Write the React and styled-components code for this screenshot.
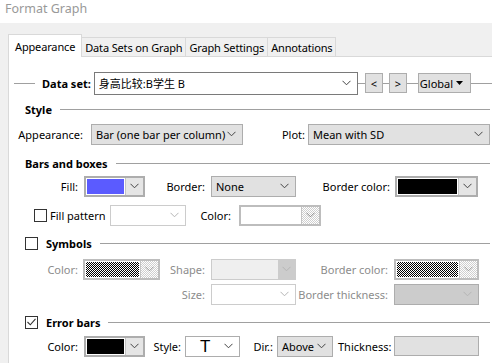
import styled, { createGlobalStyle } from "styled-components";

const GlobalStyle = createGlobalStyle`
  body {
    margin: 0;
    background: #f0f0f0;
    font-family: "Segoe UI", "Noto Sans", "Noto Sans CJK SC", sans-serif;
    font-size: 11px;
    color: #000;
    overflow: hidden;
  }
`;

const CHECKER =
  "repeating-conic-gradient(#000 0% 25%, #fff 0% 50%) 0 0 / 2px 2px";
const LIGHT_CHECKER =
  "repeating-conic-gradient(#cfcfcf 0% 25%, #fff 0% 50%) 0 0 / 2px 2px";

// Small chevron used on every dropdown
const Chevron = ({ color = "#444" }) => (
  <svg width="9" height="6" viewBox="0 0 9 6">
    <path d="M0.5 0.8 L4.5 4.8 L8.5 0.8" fill="none" stroke={color} strokeWidth="1" />
  </svg>
);

const Window = styled.div`
  width: 492px;
  height: 363px;
  display: flex;
  flex-direction: column;
`;

const TitleBar = styled.div`
  height: 23px;
  background: #fff;
  color: #999;
  font-size: 12.5px;
  padding-left: 5px;
  line-height: 17px;
`;

const Body = styled.div`
  flex: 1;
  padding: 11px 0 0 8px;
  display: flex;
  flex-direction: column;
`;

const TabStrip = styled.div`
  display: flex;
  align-items: flex-end;
  height: 22px;
`;

const Tab = styled.div`
  height: ${({ $active }) => ($active ? 22 : 18)}px;
  padding: 0 ${({ $active }) => ($active ? 6 : 3)}px;
  display: flex;
  align-items: center;
  letter-spacing: -0.15px;
  background: ${({ $active }) => ($active ? "#fff" : "#f0f0f0")};
  border: 1px solid #d9d9d9;
  border-bottom: none;
  margin-left: ${({ $active }) => ($active ? 0 : -1)}px;
  position: relative;
  z-index: ${({ $active }) => ($active ? 1 : 0)};
  margin-bottom: ${({ $active }) => ($active ? -1 : 0)}px;
`;

const Panel = styled.div`
  flex: 1;
  background: #fff;
  border-top: 1px solid #d9d9d9;
  border-left: 1px solid #d9d9d9;
  display: flex;
  flex-direction: column;
  padding-top: 15px;
`;

const Row = styled.div`
  display: flex;
  align-items: center;
  height: 22px;
  flex: none;
  margin-top: ${({ $mt }) => $mt || 0}px;
  padding-left: ${({ $pl }) => $pl || 0}px;
  color: ${({ $dim }) => ($dim ? "#8c8c8c" : "#000")};
`;

const Line = styled.div`
  height: 1px;
  background: #a0a0a0;
  width: ${({ $w }) => ($w ? `${$w}px` : "auto")};
  flex: ${({ $w }) => ($w ? "none" : 1)};
  margin-left: ${({ $ml }) => $ml || 0}px;
  margin-right: ${({ $mr }) => $mr || 0}px;
`;

const Heading = styled.span`
  font-weight: bold;
  margin-left: ${({ $ml }) => $ml || 0}px;
`;

const Label = styled.span`
  width: ${({ $w }) => $w}px;
  flex: none;
  text-align: ${({ $left }) => ($left ? "left" : "right")};
  margin-left: ${({ $ml }) => $ml || 0}px;
  margin-right: ${({ $gap }) => ($gap === undefined ? 6 : $gap)}px;
  white-space: nowrap;
  color: ${({ $dim }) => ($dim ? "#8c8c8c" : "inherit")};
`;

const Select = styled.div`
  width: ${({ $w }) => $w}px;
  height: ${({ $h }) => $h || 21}px;
  box-sizing: border-box;
  flex: none;
  display: flex;
  align-items: center;
  justify-content: space-between;
  padding: 0 6px 0 4px;
  margin-left: ${({ $ml }) => $ml || 0}px;
  border: 1px solid ${({ $variant }) =>
    $variant === "edit" ? "#7a7a7a" : $variant === "off" ? "#cccccc" : "#adadad"};
  background: ${({ $variant }) =>
    $variant === "edit" || $variant === "off" || $variant === "white"
      ? "#fff"
      : $variant === "grey"
      ? "#cccccc"
      : "#e1e1e1"};
  white-space: nowrap;
`;

// Disabled combo with a separate grey button (Shape)
const SplitCombo = styled.div`
  width: ${({ $w }) => $w}px;
  height: 21px;
  box-sizing: border-box;
  flex: none;
  display: flex;
  border: 1px solid #cccccc;
  background: #efefef;
`;

const SplitButton = styled.div`
  width: 17px;
  margin-left: auto;
  display: flex;
  align-items: center;
  justify-content: center;
  background: #cccccc;
`;

const StyleGlyph = styled.span`
  font-size: 17px;
  line-height: 1;
  margin-left: 10px;
  font-family: "Liberation Sans", sans-serif;
`;

const ColorBox = styled.div`
  width: ${({ $w }) => $w}px;
  height: 21px;
  box-sizing: border-box;
  flex: none;
  display: flex;
  border: 2px solid ${({ $off }) => ($off ? "#bdbdbd" : "#adadad")};
  background: #fff;
`;

const Swatch = styled.div`
  flex: 1;
  margin: 1px;
  background: ${({ $fill }) => $fill};
`;

const SwatchButton = styled.div`
  width: 17px;
  display: flex;
  align-items: center;
  justify-content: center;
  background: ${({ $pattern }) => ($pattern ? LIGHT_CHECKER : "#e5e5e5")};
  border-left: 1px solid #c4c4c4;
`;

const SmallButton = styled.div`
  height: 20px;
  width: ${({ $w }) => ($w ? `${$w}px` : "auto")};
  box-sizing: border-box;
  padding: 0 ${({ $px }) => ($px === undefined ? 5 : $px)}px;
  display: flex;
  align-items: center;
  justify-content: ${({ $spread }) => ($spread ? "space-between" : "center")};
  background: #e1e1e1;
  border: 1px solid #adadad;
  flex: none;
`;

const Check = styled.div`
  width: 13px;
  height: 13px;
  box-sizing: border-box;
  border: 1px solid #333;
  background: #fff;
  flex: none;
  margin-right: ${({ $mr }) => $mr}px;
  display: flex;
  align-items: center;
  justify-content: center;
`;

const ColorCombo = ({ w, fill, pattern, off }) => (
  <ColorBox $w={w} $off={off}>
    <Swatch $fill={fill} />
    <SwatchButton $pattern={pattern}>
      <Chevron color={pattern ? "#999" : "#444"} />
    </SwatchButton>
  </ColorBox>
);

const Dropdown = ({ w, variant, children, faint }) => (
  <Select $w={w} $variant={variant}>
    <span>{children}</span>
    <Chevron color={faint ? "#b5b5b5" : "#444"} />
  </Select>
);

const Section = ({ title, checkbox, checked, mt }) => (
  <Row $mt={mt} $pl={16}>
    {checkbox && (
      <Check $mr={8}>
        {checked && (
          <svg width="9" height="8" viewBox="0 0 9 8">
            <path d="M0.5 4 L3.3 6.8 L8.5 0.8" fill="none" stroke="#333" strokeWidth="1.1" />
          </svg>
        )}
      </Check>
    )}
    <Heading>{title}</Heading>
    <Line $ml={8} $mr={2} />
  </Row>
);

export default function App() {
  return (
    <Window>
      <GlobalStyle />
      <TitleBar>Format Graph</TitleBar>
      <Body>
        <TabStrip>
          <Tab $active>Appearance</Tab>
          <Tab>Data Sets on Graph</Tab>
          <Tab>Graph Settings</Tab>
          <Tab>Annotations</Tab>
        </TabStrip>
        <Panel>
          <Row $pl={5}>
            <Line $w={21} $mr={7} />
            <Heading>Data set:</Heading>
            <Select $w={264} $h={23} $ml={3} $variant="edit">
              <span>身高比较:B学生 B</span>
              <Chevron />
            </Select>
            <Line $w={7} />
            <SmallButton $w={18} $px={0}>&lt;</SmallButton>
            <Line $w={6} />
            <SmallButton $w={18} $px={0}>&gt;</SmallButton>
            <Line $w={11} />
            <SmallButton $w={53} $px={1} $spread>
              Global
              <svg width="7" height="4" viewBox="0 0 7 4" style={{ marginRight: 6 }}>
                <path d="M0 0 H7 L3.5 4 Z" fill="#000" />
              </svg>
            </SmallButton>
            <Line />
          </Row>

          <Section title="Style" mt={4} />
          <Row $mt={3}>
            <Label $w={74} $gap={8}>Appearance:</Label>
            <Dropdown w={152}>Bar (one bar per column)</Dropdown>
            <Label $w={62} $gap={3}>Plot:</Label>
            <Dropdown w={182}>Mean with SD</Dropdown>
          </Row>

          <Section title="Bars and boxes" mt={7} />
          <Row $mt={1}>
            <Label $w={69}>Fill:</Label>
            <ColorCombo w={61} fill="#5b5bff" />
            <Label $w={60}>Border:</Label>
            <Dropdown w={85}>None</Dropdown>
            <Label $w={94} $gap={5}>Border color:</Label>
            <ColorCombo w={83} fill="#000" />
          </Row>
          <Row $mt={7} $pl={25}>
            <Check $mr={3} />
            <Label $w={60} $left $gap={0}>Fill pattern</Label>
            <Dropdown w={76} variant="off" faint />
            <Label $w={45} $gap={8}>Color:</Label>
            <ColorBox $w={82} $off>
              <Swatch $fill="#fff" />
              <SwatchButton $pattern>
                <Chevron color="#888" />
              </SwatchButton>
            </ColorBox>
          </Row>

          <Section title="Symbols" checkbox mt={6} />
          <Row $mt={4} $dim>
            <Label $w={69} $gap={5}>Color:</Label>
            <ColorCombo w={77} fill={CHECKER} pattern off />
            <Label $w={45}>Shape:</Label>
            <SplitCombo $w={85}>
              <SplitButton>
                <Chevron color="#b5b5b5" />
              </SplitButton>
            </SplitCombo>
            <Label $w={92}>Border color:</Label>
            <ColorCombo w={85} fill={CHECKER} pattern off />
          </Row>
          <Row $mt={3} $dim>
            <Label $w={196}>Size:</Label>
            <Dropdown w={85} variant="off" faint />
            <Label $w={92}>Border thickness:</Label>
            <Dropdown w={85} variant="grey" faint />
          </Row>

          <Section title="Error bars" checkbox checked mt={6} />
          <Row $mt={2}>
            <Label $w={69}>Color:</Label>
            <ColorCombo w={61} fill="#000" />
            <Label $w={36} $gap={4}>Style:</Label>
            <Select $w={55} $variant="white">
              <StyleGlyph>T</StyleGlyph>
              <Chevron />
            </Select>
            <Label $w={33} $gap={4}>Dir.:</Label>
            <Dropdown w={56}>Above</Dropdown>
            <Label $w={56} $ml={5} $left $gap={0}>Thickness:</Label>
            <SmallButton $w={85} />
          </Row>
        </Panel>
      </Body>
    </Window>
  );
}
